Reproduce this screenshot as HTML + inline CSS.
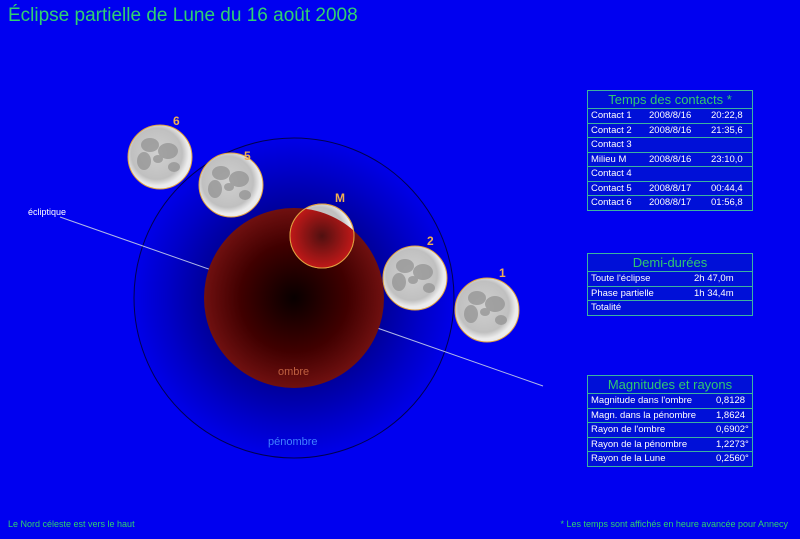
<!DOCTYPE html><html><head><style>
body{margin:0;width:800px;height:539px;overflow:hidden;background:#0000f0;font-family:"Liberation Sans",sans-serif;position:relative}
.t{position:absolute;border:1px solid #3cb3a0;background:#0010d8}
.t .h{color:#30c870;font-size:13px;text-align:center;height:17px;line-height:17px;border-bottom:1px solid #3cb3a0}
.t .r{color:#fff;font-size:9.5px;height:13.5px;line-height:13.5px;border-bottom:1px solid #3cb3a0;position:relative;padding-left:3px}
.t .r:last-child{border-bottom:none}
.r span{position:absolute}
.lbl{position:absolute;color:#f0b050;font-size:12px;font-weight:bold}
</style></head><body>
<div style="position:absolute;left:8px;top:5px;color:#30d070;font-size:19px">Éclipse partielle de Lune du 16 août 2008</div>
<svg width="800" height="539" style="position:absolute;left:0;top:0">
<defs>
<radialGradient id="pen"><stop offset="0" stop-color="#000020"/><stop offset="0.5" stop-color="#000090"/><stop offset="0.8" stop-color="#0000c8"/><stop offset="1" stop-color="#0000e8"/></radialGradient>
<radialGradient id="umb"><stop offset="0" stop-color="#080000"/><stop offset="0.6" stop-color="#400000"/><stop offset="1" stop-color="#701010"/></radialGradient>
<radialGradient id="moon" cx="0.45" cy="0.45"><stop offset="0" stop-color="#d0d0d0"/><stop offset="0.8" stop-color="#c0c0c0"/><stop offset="1" stop-color="#ececec"/></radialGradient>
<radialGradient id="rm"><stop offset="0" stop-color="#501010"/><stop offset="1" stop-color="#c01818"/></radialGradient>
<clipPath id="uc"><circle cx="294" cy="298" r="90"/></clipPath>
<g id="mn"><circle r="32" fill="url(#moon)" stroke="#e0a040"/><g fill="#909090" opacity="0.7"><ellipse cx="-10" cy="-12" rx="9" ry="7"/><ellipse cx="8" cy="-6" rx="10" ry="8"/><ellipse cx="-16" cy="4" rx="7" ry="9"/><ellipse cx="14" cy="10" rx="6" ry="5"/><ellipse cx="-2" cy="2" rx="5" ry="4"/></g></g>
</defs>
<circle cx="294" cy="298" r="160" fill="url(#pen)" stroke="#000050" stroke-width="1"/>
<line x1="60" y1="217" x2="543" y2="386" stroke="#b0b8e8" stroke-width="1"/>
<circle cx="294" cy="298" r="90" fill="url(#umb)"/>
<use href="#mn" x="160" y="157"/>
<use href="#mn" x="231" y="185"/>
<use href="#mn" x="415" y="278"/>
<use href="#mn" x="487" y="310"/>
<use href="#mn" x="322" y="236"/>
<circle cx="322" cy="236" r="32" fill="url(#rm)" clip-path="url(#uc)"/>
<circle cx="322" cy="236" r="32" fill="none" stroke="#e0a040"/>
</svg>
<div style="position:absolute;left:28px;top:207px;color:#fff;font-size:9px">écliptique</div>
<div style="position:absolute;left:278px;top:366px;color:#c06040;font-size:11px">ombre</div>
<div style="position:absolute;left:268px;top:436px;color:#4080ff;font-size:11px">pénombre</div>
<div class="lbl" style="left:173px;top:114px">6</div>
<div class="lbl" style="left:244px;top:149px">5</div>
<div class="lbl" style="left:335px;top:191px">M</div>
<div class="lbl" style="left:427px;top:234px">2</div>
<div class="lbl" style="left:499px;top:266px">1</div>
<div class="t" style="left:587px;top:90px;width:164px">
<div class="h">Temps des contacts *</div>
<div class="r">Contact 1<span style="left:61px">2008/8/16</span><span style="left:123px">20:22,8</span></div>
<div class="r">Contact 2<span style="left:61px">2008/8/16</span><span style="left:123px">21:35,6</span></div>
<div class="r">Contact 3</div>
<div class="r">Milieu M<span style="left:61px">2008/8/16</span><span style="left:123px">23:10,0</span></div>
<div class="r">Contact 4</div>
<div class="r">Contact 5<span style="left:61px">2008/8/17</span><span style="left:123px">00:44,4</span></div>
<div class="r">Contact 6<span style="left:61px">2008/8/17</span><span style="left:123px">01:56,8</span></div>
</div>
<div class="t" style="left:587px;top:253px;width:164px">
<div class="h">Demi-durées</div>
<div class="r">Toute l'éclipse<span style="left:106px">2h 47,0m</span></div>
<div class="r">Phase partielle<span style="left:106px">1h 34,4m</span></div>
<div class="r">Totalité</div>
</div>
<div class="t" style="left:587px;top:375px;width:164px">
<div class="h">Magnitudes et rayons</div>
<div class="r">Magnitude dans l'ombre<span style="left:128px">0,8128</span></div>
<div class="r">Magn. dans la pénombre<span style="left:128px">1,8624</span></div>
<div class="r">Rayon de l'ombre<span style="left:128px">0,6902°</span></div>
<div class="r">Rayon de la pénombre<span style="left:128px">1,2273°</span></div>
<div class="r">Rayon de la Lune<span style="left:128px">0,2560°</span></div>
</div>
<div style="position:absolute;left:8px;top:519px;color:#30d070;font-size:9px">Le Nord céleste est vers le haut</div>
<div style="position:absolute;right:12px;top:519px;color:#30d070;font-size:9px">* Les temps sont affichés en heure avancée pour Annecy</div>
</body></html>
